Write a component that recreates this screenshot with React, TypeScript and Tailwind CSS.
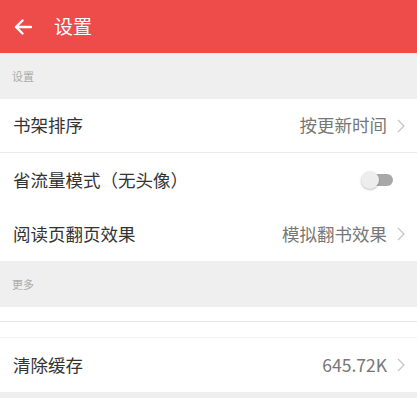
import React from 'react';

const font = { fontFamily: '"Noto Sans CJK SC", "Noto Sans", sans-serif' };

const Chevron: React.FC = () => (
  <svg width="8" height="14" viewBox="0 0 8 14" className="ml-[10px] shrink-0">
    <path d="M1 1l6 6-6 6" fill="none" stroke="#c4c4c4" strokeWidth="1.2" />
  </svg>
);

const Row: React.FC<{ label: string; value?: string; toggle?: boolean; border?: boolean }> = ({ label, value, toggle, border }) => (
  <div className={`flex h-[54px] items-center justify-between bg-white pl-[13px] pr-3 ${border ? 'border-b border-[#ececec]' : ''}`}>
    <span className="text-[17.5px] text-[#333]">{label}</span>
    {toggle ? (
      <div className="relative mr-[12px] h-[18px] w-[32px]">
        <div className="absolute right-0 top-[3px] h-[12px] w-[24px] rounded-full bg-[#a8a8a8]" />
        <div className="absolute left-0 top-0 h-[18px] w-[18px] rounded-full bg-[#ededed] shadow-[0_1px_2px_rgba(0,0,0,0.25)]" />
      </div>
    ) : (
      <div className="flex items-center">
        <span className="text-[17.5px] text-[#777]">{value}</span>
        <Chevron />
      </div>
    )}
  </div>
);

const App: React.FC = () => {
  return (
    <div className="h-[398px] w-[417px] overflow-hidden bg-[#efefef]" style={font}>
      <div className="flex h-[53px] items-center bg-[#ee4b4b] px-[14px]">
        <svg width="18" height="16" viewBox="0 0 18 16">
          <path d="M17 8H2M8.5 1.5L2 8l6.5 6.5" fill="none" stroke="#fff" strokeWidth="2.4" strokeLinecap="round" strokeLinejoin="round" />
        </svg>
        <span className="ml-[22px] text-[19px] text-white">设置</span>
      </div>

      <div className="flex h-[46px] items-center px-3 text-[11px] text-[#ababab]">设置</div>
      <Row label="书架排序" value="按更新时间" border />
      <Row label="省流量模式（无头像）" toggle />
      <Row label="阅读页翻页效果" value="模拟翻书效果" />

      <div className="flex h-[46px] items-center px-3 text-[11px] text-[#ababab]">更多</div>
      <div className="h-[15px] border-b border-[#e6e6e6] bg-white" />
      <div className="h-[16px] border-b border-[#f3f3f3] bg-white" />
      <Row label="清除缓存" value="645.72K" />
    </div>
  );
};

export default App;
